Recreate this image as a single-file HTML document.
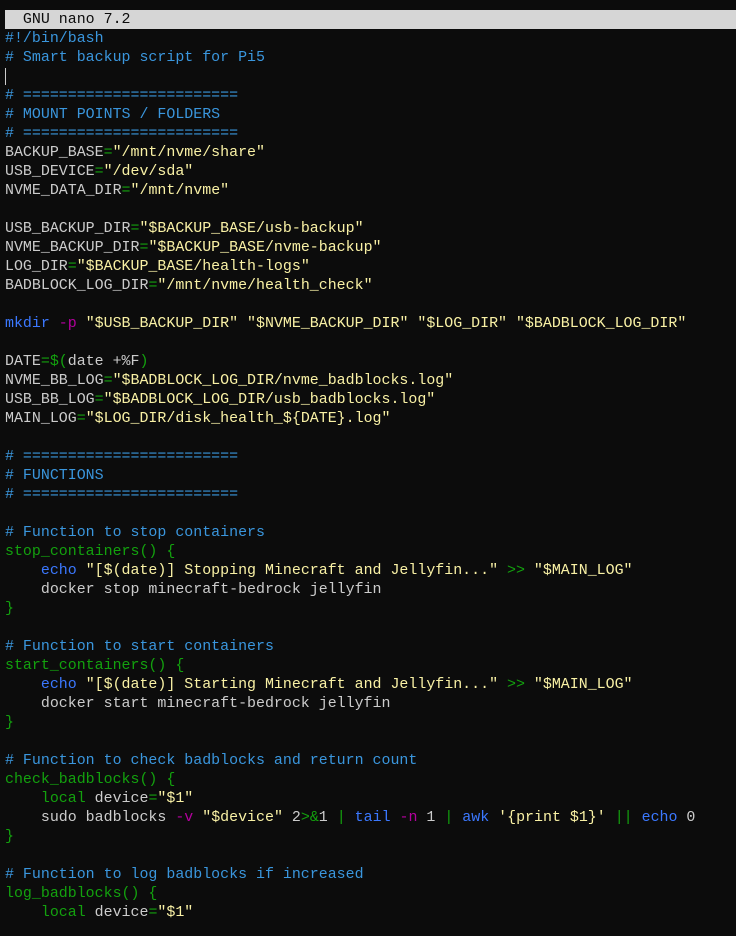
<!DOCTYPE html>
<html><head><style>
html,body{margin:0;padding:0;background:#0c0c0c;width:736px;height:936px;overflow:hidden}
pre{margin:0;position:absolute;left:5px;top:11px;font-family:"Liberation Mono",monospace;font-size:14.95px;line-height:19px;color:#cccccc;white-space:pre}
.bar{position:absolute;left:5px;top:10px;width:731px;height:19px;background:#d6d6d6}
.t{color:#0c0c0c}
.c{color:#3a96dd}.g{color:#13a10e}.y{color:#f9f1a5}.m{color:#b4009e}.b{color:#3b78ff}
.cur{display:inline-block;width:1px;height:17px;background:#ccc;vertical-align:middle}
</style></head><body>
<div class="bar"></div>
<pre><span class="t">  GNU nano 7.2</span>
<span class="c">#!/bin/bash</span>
<span class="c"># Smart backup script for Pi5</span>
<span class="cur"></span>
<span class="c"># ========================</span>
<span class="c"># MOUNT POINTS / FOLDERS</span>
<span class="c"># ========================</span>
BACKUP_BASE<span class="g">=</span><span class="y">"/mnt/nvme/share"</span>
USB_DEVICE<span class="g">=</span><span class="y">"/dev/sda"</span>
NVME_DATA_DIR<span class="g">=</span><span class="y">"/mnt/nvme"</span>

USB_BACKUP_DIR<span class="g">=</span><span class="y">"$BACKUP_BASE/usb-backup"</span>
NVME_BACKUP_DIR<span class="g">=</span><span class="y">"$BACKUP_BASE/nvme-backup"</span>
LOG_DIR<span class="g">=</span><span class="y">"$BACKUP_BASE/health-logs"</span>
BADBLOCK_LOG_DIR<span class="g">=</span><span class="y">"/mnt/nvme/health_check"</span>

<span class="b">mkdir</span> <span class="m">-p</span> <span class="y">"$USB_BACKUP_DIR" "$NVME_BACKUP_DIR" "$LOG_DIR" "$BADBLOCK_LOG_DIR"</span>

DATE<span class="g">=$(</span>date +%F<span class="g">)</span>
NVME_BB_LOG<span class="g">=</span><span class="y">"$BADBLOCK_LOG_DIR/nvme_badblocks.log"</span>
USB_BB_LOG<span class="g">=</span><span class="y">"$BADBLOCK_LOG_DIR/usb_badblocks.log"</span>
MAIN_LOG<span class="g">=</span><span class="y">"$LOG_DIR/disk_health_${DATE}.log"</span>

<span class="c"># ========================</span>
<span class="c"># FUNCTIONS</span>
<span class="c"># ========================</span>

<span class="c"># Function to stop containers</span>
<span class="g">stop_containers() {</span>
    <span class="b">echo</span> <span class="y">"[$(date)] Stopping Minecraft and Jellyfin..."</span> <span class="g">&gt;&gt;</span> <span class="y">"$MAIN_LOG"</span>
    docker stop minecraft-bedrock jellyfin
<span class="g">}</span>

<span class="c"># Function to start containers</span>
<span class="g">start_containers() {</span>
    <span class="b">echo</span> <span class="y">"[$(date)] Starting Minecraft and Jellyfin..."</span> <span class="g">&gt;&gt;</span> <span class="y">"$MAIN_LOG"</span>
    docker start minecraft-bedrock jellyfin
<span class="g">}</span>

<span class="c"># Function to check badblocks and return count</span>
<span class="g">check_badblocks() {</span>
    <span class="g">local</span> device<span class="g">=</span><span class="y">"$1"</span>
    sudo badblocks <span class="m">-v</span> <span class="y">"$device"</span> 2<span class="g">&gt;&amp;</span>1 <span class="g">|</span> <span class="b">tail</span> <span class="m">-n</span> 1 <span class="g">|</span> <span class="b">awk</span> <span class="y">'{print $1}'</span> <span class="g">||</span> <span class="b">echo</span> 0
<span class="g">}</span>

<span class="c"># Function to log badblocks if increased</span>
<span class="g">log_badblocks() {</span>
    <span class="g">local</span> device<span class="g">=</span><span class="y">"$1"</span>
</pre>
</body></html>
